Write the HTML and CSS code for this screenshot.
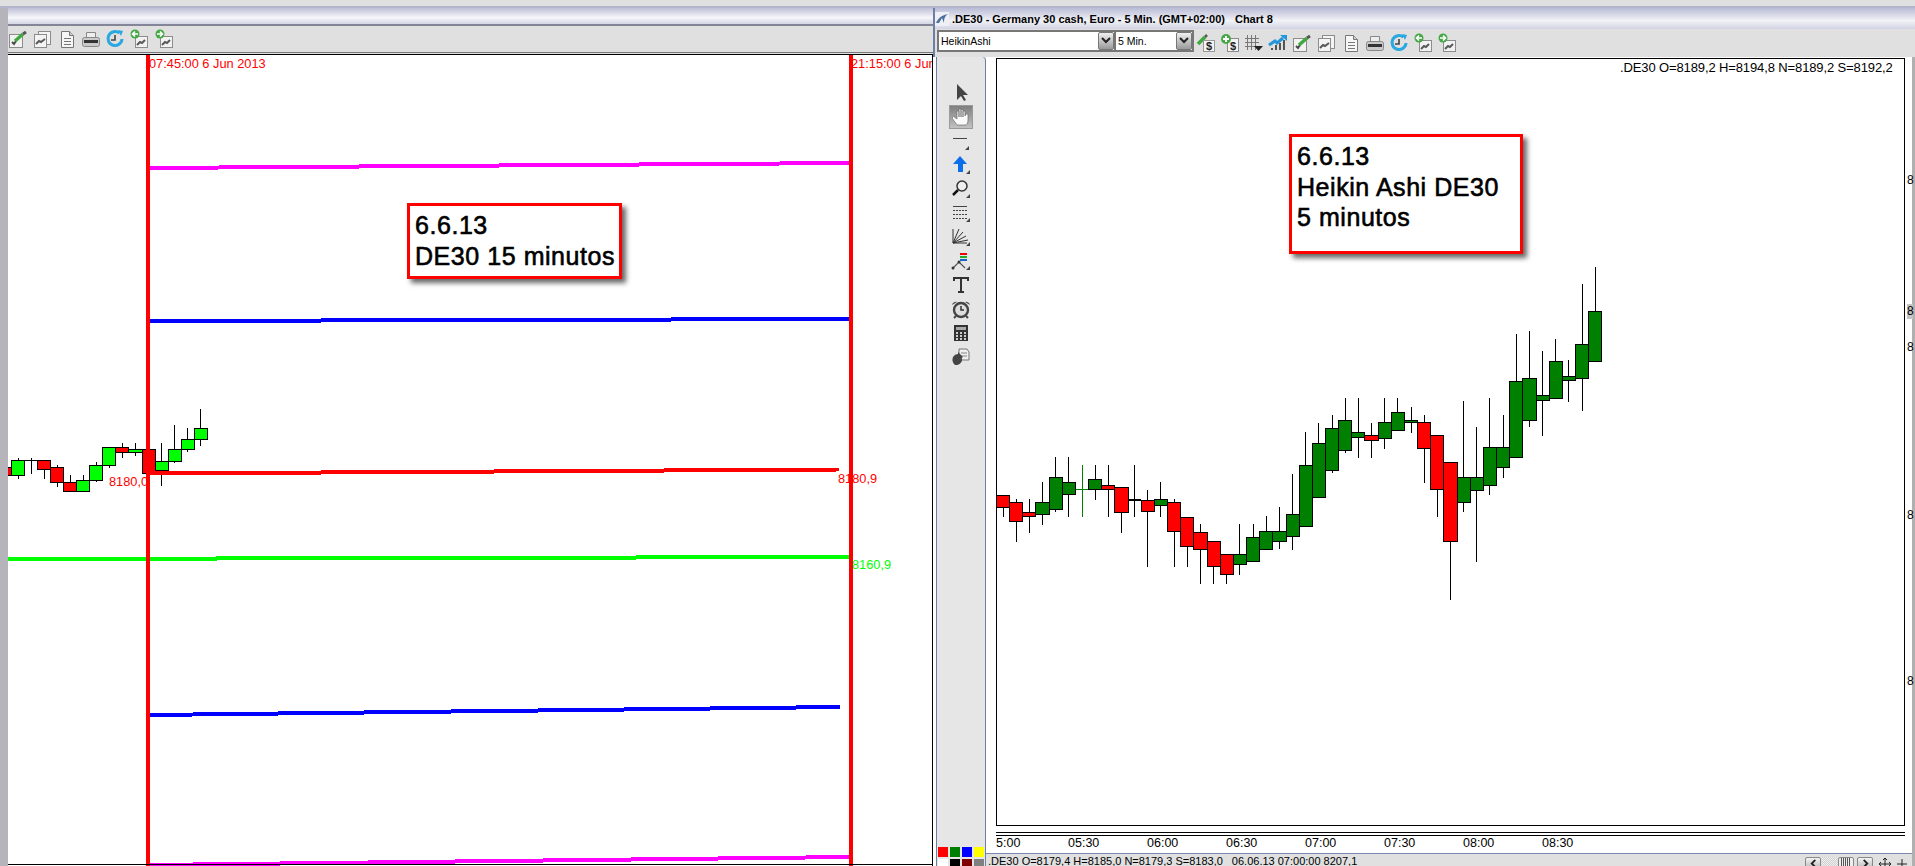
FILE: index.html
```html
<!DOCTYPE html>
<html lang="es">
<head>
<meta charset="utf-8">
<title>.DE30 charts</title>
<link rel="stylesheet" href="styles.css">
</head>
<body>
<svg class="defs" width="0" height="0" aria-hidden="true">
  <defs>
    <symbol id="i-edit" viewBox="0 0 20 20"><rect x="1.500" y="5.500" width="13" height="13" fill="#f2f2f2" stroke="#8c8c8c"/><path d="M4 13l2 2 2-3" fill="none" stroke="#4a4a4a" stroke-width="2"/><path d="M7 12l8-7" stroke="#3fa83f" stroke-width="3.500"/><path d="M15 5l3-2" stroke="#555" stroke-width="3"/></symbol>
    <symbol id="i-copy" viewBox="0 0 20 20"><rect x="6.500" y="2.500" width="12" height="13" fill="#f4f4f4" stroke="#8c8c8c"/><rect x="2.500" y="5.500" width="12" height="13" fill="#f4f4f4" stroke="#8c8c8c"/><path d="M4 15l3-3 2 1 4-3" fill="none" stroke="#5a5a5a" stroke-width="2"/></symbol>
    <symbol id="i-page" viewBox="0 0 20 20"><path d="M4.500 2.500h8l4 4v12h-12z" fill="#f6f6f6" stroke="#777"/><path d="M12.500 2.500v4h4" fill="#ccc" stroke="#777"/><path d="M7 9.500h7M7 12.500h7M7 15.500h7" stroke="#777"/></symbol>
    <symbol id="i-print" viewBox="0 0 20 20"><path d="M5.500 3.500h9v5h-9z" fill="#eee" stroke="#888"/><rect x="1.500" y="8.500" width="17" height="9" rx="2" fill="#c9c9c9" stroke="#888"/><rect x="3" y="11" width="14" height="3" fill="#333"/></symbol>
    <symbol id="i-clock" viewBox="0 0 20 20"><path d="M14.500 4.200A7 7 0 1 0 17 10" fill="none" stroke="#2aa8e0" stroke-width="3"/><path d="M13 1l5 1-2 5z" fill="#2aa8e0"/><path d="M10 6v5h-4" fill="none" stroke="#444" stroke-width="1.600"/></symbol>
    <symbol id="i-back" viewBox="0 0 20 20"><rect x="6.500" y="7.500" width="12" height="11" fill="#f2f2f2" stroke="#8c8c8c"/><path d="M8 16l3-3 2 1 3-3" fill="none" stroke="#5a5a5a" stroke-width="2"/><circle cx="6" cy="5" r="4.500" fill="#45a845"/><path d="M9 5H4M6 2.500L3.500 5 6 7.500" fill="none" stroke="#fff" stroke-width="1.600"/></symbol>
    <symbol id="i-fwd" viewBox="0 0 20 20"><rect x="6.500" y="7.500" width="12" height="11" fill="#f2f2f2" stroke="#8c8c8c"/><path d="M8 16l3-3 2 1 3-3" fill="none" stroke="#5a5a5a" stroke-width="2"/><circle cx="6" cy="5" r="4.500" fill="#45a845"/><path d="M3 5h5M6 2.500L8.500 5 6 7.500" fill="none" stroke="#fff" stroke-width="1.600"/></symbol>
    <symbol id="i-dollar" viewBox="0 0 20 20"><path d="M2 11l7-7" stroke="#3fa83f" stroke-width="3.500"/><path d="M9 4l2-2" stroke="#555" stroke-width="2.500"/><rect x="7.500" y="7.500" width="11" height="11" fill="#f4f4f4" stroke="#999"/><text class="icon-dollar" x="13" y="17">$</text></symbol>
    <symbol id="i-plusd" viewBox="0 0 20 20"><rect x="7.500" y="5.500" width="11" height="13" fill="#f4f4f4" stroke="#8c8c8c"/><text class="icon-dollar" x="13" y="16.500">$</text><circle cx="6" cy="6" r="5" fill="#45a845"/><path d="M3 6h6M6 3v6" stroke="#fff" stroke-width="2"/></symbol>
    <symbol id="i-grid" viewBox="0 0 20 20"><path d="M1 5.500h14M1 9.500h14M1 13.500h14M3.500 2v15M7.500 2v15M11.500 2v15" stroke="#777"/><path d="M10 13h9l-4.500 5z" fill="#222"/></symbol>
    <symbol id="i-growth" viewBox="0 0 20 20"><path d="M3 17h2v-2H3zM7 17h2v-5H7zM11 17h2v-7h-2zM15 17h2V7h-2z" fill="#555"/><path d="M1 12l6-4 2 2 6-5" fill="none" stroke="#2496dc" stroke-width="3"/><path d="M12 2h7v6z" fill="#2496dc"/></symbol>
    <symbol id="t-arrow" viewBox="0 0 20 20"><path d="M6 1v16l4-4 3 5 2-1-3-5h5z" fill="#444"/></symbol>
    <symbol id="t-hand" viewBox="0 0 20 20"><path d="M6 18L1 11l1.500-1.500L6 12V4h2v6V2h2v8V2.500h2V10V4h2v5l1-2h2v6c0 3-1 4-2 5z" fill="#fafafa" stroke="#6e6e6e" stroke-width=".7"/></symbol>
    <symbol id="t-line" viewBox="0 0 20 20"><path d="M2 7.500h14" stroke="#444"/><path d="M18 15v4h-4z" fill="#444"/></symbol>
    <symbol id="t-up" viewBox="0 0 20 20"><path d="M9 1l7 8h-4v8H7V9H2z" fill="#0a6fe8"/><path d="M19 15v4h-4z" fill="#444"/></symbol>
    <symbol id="t-zoom" viewBox="0 0 20 20"><circle cx="11" cy="7" r="5" fill="#eee" stroke="#333" stroke-width="1.500"/><path d="M7 11l-5 5" stroke="#111" stroke-width="2.500"/><path d="M19 15v4h-4z" fill="#444"/></symbol>
    <symbol id="t-dots" viewBox="0 0 20 20"><path d="M2 3.500h14" stroke="#444"/><path d="M2 7.500h14M2 11.500h14M2 15.500h14" stroke="#444" stroke-dasharray="2 1"/><path d="M19 15v4h-4z" fill="#444"/></symbol>
    <symbol id="t-fan" viewBox="0 0 20 20"><path d="M2 2v14h14M2 16l6-14M2 16l10-11M2 16l13-7M2 16l15-3" fill="none" stroke="#333"/><path d="M19 15v4h-4z" fill="#444"/></symbol>
    <symbol id="t-zig" viewBox="0 0 20 20"><path d="M2 17l6-6 6 6" fill="none" stroke="#555" stroke-width="1.200"/><circle cx="2" cy="17" r="1.500" fill="#333"/><circle cx="8" cy="11" r="1.500" fill="#333"/><path d="M9 2h7v2H9z" fill="#e00"/><path d="M9 5h7v2H9z" fill="#2a2"/><path d="M9 8h7v2H9z" fill="#16c"/><path d="M19 15v4h-4z" fill="#444"/></symbol>
    <symbol id="t-text" viewBox="0 0 20 20"><path d="M3 6V3h14v3M10 3v14M7 17h6" fill="none" stroke="#333" stroke-width="2"/></symbol>
    <symbol id="t-alarm" viewBox="0 0 20 20"><circle cx="10" cy="11" r="7" fill="#ddd" stroke="#444" stroke-width="2.400"/><path d="M10 7v4h3" fill="none" stroke="#333" stroke-width="1.500"/><path d="M1 6a4 4 0 0 1 5-3zM19 6a4 4 0 0 0-5-3z" fill="#444"/><path d="M5 17l-2 2M15 17l2 2" stroke="#444" stroke-width="2"/></symbol>
    <symbol id="t-calc" viewBox="0 0 20 20"><rect x="3" y="2" width="14" height="16" fill="#333"/><rect x="5" y="4" width="10" height="3" fill="#aaa"/><path d="M5 9h2v2H5zM9 9h2v2H9zM13 9h2v2h-2zM5 12h2v2H5zM9 12h2v2H9zM13 12h2v2h-2zM5 15h2v2H5zM9 15h2v2H9zM13 15h2v2h-2z" fill="#ccc"/></symbol>
    <symbol id="t-link" viewBox="0 0 20 20"><path d="M8 2h8l2 3v8H8z" fill="#eee" stroke="#777"/><path d="M10 6h6M10 9h6" stroke="#888"/><path d="M11 11a6 6 0 0 1-7 7 7 7 0 0 1-2-8 6 6 0 0 1 5-3v-2l5 5-5 4z" fill="#444"/></symbol>
  </defs>
</svg>

<div class="strip"></div>
<main class="panes">
  <section class="left">
    <div class="caption"></div>
    <div class="toolbar toolbar-left">
      <svg class="ico"><use href="#i-edit"/></svg>
      <svg class="ico"><use href="#i-copy"/></svg>
      <svg class="ico"><use href="#i-page"/></svg>
      <svg class="ico"><use href="#i-print"/></svg>
      <svg class="ico"><use href="#i-clock"/></svg>
      <svg class="ico"><use href="#i-back"/></svg>
      <svg class="ico"><use href="#i-fwd"/></svg>
    </div>
    <div class="chart-left">
      <svg class="plot" width="925" height="812" viewBox="8 54 925 812">
        <text class="lbl red" x="149" y="68">07:45:00 6 Jun 2013</text>
        <text class="lbl red" x="851" y="68">21:15:00 6 Jun</text>
        <text class="lbl red" x="109" y="486">8180,0</text>
        <text class="lbl red" x="838" y="483">8180,9</text>
        <text class="lbl lime" x="852" y="569">8160,9</text>
        <g class="candles" transform="translate(0 400) scale(.33333)">
          <rect class="r" x="24" y="202" width="10" height="24"/>
          <path class="w" d="M55 175V236"/><rect class="l" x="34" y="181" width="39" height="45"/>
          <path class="w" d="M94 175V221M73 181H112"/>
          <path class="w" d="M133 208V236"/><rect class="r" x="112" y="181" width="39" height="27"/>
          <path class="w" d="M172 196V260"/><rect class="r" x="151" y="202" width="39" height="45"/>
          <path class="w" d="M211 226V247"/><rect class="r" x="190" y="247" width="39" height="27"/>
          <path class="w" d="M250 226V241"/><rect class="l" x="229" y="241" width="39" height="33"/>
          <path class="w" d="M289 187V247"/><rect class="l" x="268" y="196" width="39" height="45"/>
          <path class="w" d="M328 196V205"/><rect class="l" x="307" y="142" width="39" height="54"/>
          <path class="w" d="M367 130V175"/><rect class="r" x="346" y="142" width="39" height="15"/>
          <path class="w" d="M406 130V169"/><rect class="l" x="385" y="148" width="42" height="9"/>
          <rect class="r" x="427" y="148" width="39" height="72"/>
          <path class="w" d="M484 130V258"/><rect class="l" x="466" y="184" width="39" height="27"/>
          <path class="w" d="M523 76V190"/><rect class="l" x="505" y="148" width="39" height="36"/>
          <path class="w" d="M562 85V157"/><rect class="l" x="544" y="118" width="39" height="30"/>
          <path class="w" d="M601 28V139"/><rect class="l" x="583" y="85" width="39" height="33"/>
        </g>
        <g class="levels">
          <path class="magenta" d="M150 168L850 163"/>
          <path class="blue" d="M150 321L850 319"/>
          <path class="rline" d="M150 473.500L839 469.500"/>
          <path class="green" d="M8 559L850 557"/>
          <path class="blue" d="M150 715L840 707"/>
          <path class="magenta" d="M150 865L850 857"/>
        </g>
        <rect class="vbar" x="146" y="54" width="4" height="812"/>
        <rect class="vbar" x="849" y="54" width="4" height="812"/>
        <path class="frame" d="M8 54.500H933M932.500 54V866M8 864.500H933"/>
      </svg>
      <div class="note note-left">6.6.13<br>DE30 15 minutos</div>
    </div>
  </section>

  <section class="right">
    <header class="win-title">
      <svg class="win-logo" viewBox="0 0 14 14"><path d="M1 11c2-5 6-8 12-9-3 2-4 4-4 9l-2-5-3 5z" fill="#4d6f9f"/></svg>
      <span class="win-name">.DE30 - Germany 30 cash, Euro - 5 Min. (GMT+02:00)</span>
      <span class="win-chart">Chart 8</span>
    </header>
    <div class="toolbar toolbar-right">
      <div class="combo combo-type"><span>HeikinAshi</span><i class="combo-btn"><svg viewBox="0 0 10 8"><path d="M1 1l4 4 4-4" fill="none" stroke="#222" stroke-width="2"/></svg></i></div>
      <div class="combo combo-period"><span>5 Min.</span><i class="combo-btn"><svg viewBox="0 0 10 8"><path d="M1 1l4 4 4-4" fill="none" stroke="#222" stroke-width="2"/></svg></i></div>
      <div class="icons">
        <svg class="ico"><use href="#i-dollar"/></svg>
        <svg class="ico"><use href="#i-plusd"/></svg>
        <svg class="ico"><use href="#i-grid"/></svg>
        <svg class="ico"><use href="#i-growth"/></svg>
        <svg class="ico"><use href="#i-edit"/></svg>
        <svg class="ico"><use href="#i-copy"/></svg>
        <svg class="ico"><use href="#i-page"/></svg>
        <svg class="ico"><use href="#i-print"/></svg>
        <svg class="ico"><use href="#i-clock"/></svg>
        <svg class="ico"><use href="#i-back"/></svg>
        <svg class="ico"><use href="#i-fwd"/></svg>
      </div>
    </div>
    <div class="win-body">
      <aside class="tools">
        <span class="tool"><svg class="tico"><use href="#t-arrow"/></svg></span>
        <span class="tool active"><svg class="tico"><use href="#t-hand"/></svg></span>
        <span class="tool"><svg class="tico"><use href="#t-line"/></svg></span>
        <span class="tool"><svg class="tico"><use href="#t-up"/></svg></span>
        <span class="tool"><svg class="tico"><use href="#t-zoom"/></svg></span>
        <span class="tool"><svg class="tico"><use href="#t-dots"/></svg></span>
        <span class="tool"><svg class="tico"><use href="#t-fan"/></svg></span>
        <span class="tool"><svg class="tico"><use href="#t-zig"/></svg></span>
        <span class="tool"><svg class="tico"><use href="#t-text"/></svg></span>
        <span class="tool"><svg class="tico"><use href="#t-alarm"/></svg></span>
        <span class="tool"><svg class="tico"><use href="#t-calc"/></svg></span>
        <span class="tool"><svg class="tico"><use href="#t-link"/></svg></span>
        <div class="swatches">
          <i class="sw sw-red"></i><i class="sw sw-green"></i><i class="sw sw-blue"></i><i class="sw sw-yellow"></i>
          <i class="sw sw-white"></i><i class="sw sw-black"></i><i class="sw sw-maroon"></i><i class="sw sw-gray"></i>
        </div>
      </aside>
      <div class="main">
        <div class="plot-area">
          <div class="chart-box">
            <svg class="plot" width="907" height="766" viewBox="997 59 907 766">
              <text class="lbl-top" x="1620" y="72">.DE30 O=8189,2 H=8194,8 N=8189,2 S=8192,2</text>
              <g class="candles" transform="translate(990 440) scale(.33333)">
                <path class="w" d="M40 202V230"/><rect class="r" x="20" y="166" width="38" height="36"/>
                <path class="w" d="M79 178V305"/><rect class="r" x="59" y="187" width="38" height="57"/>
                <path class="w" d="M118 178V278"/><rect class="r" x="98" y="217" width="39" height="12"/>
                <path class="w" d="M157 127V254"/><rect class="d" x="137" y="187" width="41" height="36"/>
                <path class="w" d="M196 52V215"/><rect class="d" x="178" y="112" width="39" height="96"/>
                <path class="w" d="M235 52V230"/><rect class="d" x="218" y="127" width="38" height="36"/>
                <path class="wg" d="M277 76V230M257 148H295"/>
                <path class="w" d="M316 76V179"/><rect class="d" x="295" y="118" width="39" height="30"/>
                <path class="w" d="M355 76V230"/><rect class="r" x="335" y="136" width="38" height="12"/>
                <path class="w" d="M394 217V278"/><rect class="r" x="374" y="142" width="41" height="75"/>
                <path class="w" d="M433 76V230M415 178H454M415 181H454"/>
                <path class="w" d="M472 151V380"/><rect class="r" x="454" y="181" width="39" height="33"/>
                <path class="w" d="M511 127V230"/><rect class="d" x="493" y="178" width="39" height="18"/>
                <path class="w" d="M553 178V380"/><rect class="r" x="532" y="187" width="39" height="87"/>
                <path class="w" d="M592 319V380"/><rect class="r" x="572" y="232" width="38" height="87"/>
                <path class="w" d="M631 253V431"/><rect class="r" x="611" y="277" width="41" height="51"/>
                <path class="w" d="M670 379V431"/><rect class="r" x="653" y="304" width="38" height="75"/>
                <path class="w" d="M709 403V431"/><rect class="r" x="691" y="343" width="39" height="60"/>
                <path class="w" d="M748 253V404"/><rect class="d" x="730" y="343" width="39" height="30"/>
                <path class="w" d="M790 253V292"/><rect class="d" x="769" y="292" width="39" height="72"/>
                <path class="w" d="M829 229V274"/><rect class="d" x="808" y="274" width="39" height="54"/>
                <path class="w" d="M868 202V328"/><rect class="d" x="848" y="274" width="41" height="30"/>
                <path class="w" d="M907 103V329"/><rect class="d" x="889" y="223" width="39" height="66"/>
              </g>
              <g class="candles" transform="translate(1290 250) scale(.33333)">
                <path class="w" d="M46 546V832"/><rect class="d" x="28" y="646" width="39" height="183"/>
                <path class="w" d="M85 519V580"/><rect class="d" x="67" y="580" width="39" height="162"/>
                <path class="w" d="M127 495V668"/><rect class="d" x="106" y="535" width="39" height="126"/>
                <path class="w" d="M166 445V608"/><rect class="d" x="145" y="511" width="39" height="90"/>
                <path class="w" d="M205 445V623"/><rect class="d" x="184" y="547" width="39" height="15"/>
                <path class="w" d="M244 520V623"/><rect class="r" x="223" y="556" width="42" height="15"/>
                <path class="w" d="M283 445V596"/><rect class="d" x="265" y="517" width="39" height="48"/>
                <path class="w" d="M322 445V487"/><rect class="d" x="304" y="487" width="39" height="54"/>
                <path class="w" d="M364 472V548"/><rect class="d" x="343" y="511" width="39" height="6"/>
                <path class="w" d="M403 496V698"/><rect class="r" x="382" y="517" width="39" height="78"/>
                <path class="w" d="M442 718V800"/><rect class="r" x="421" y="556" width="39" height="162"/>
                <path class="w" d="M481 874V1049"/><rect class="r" x="460" y="637" width="42" height="237"/>
                <path class="w" d="M520 454V785"/><rect class="d" x="502" y="682" width="39" height="75"/>
                <path class="w" d="M559 532V935"/><rect class="d" x="541" y="682" width="39" height="39"/>
                <path class="w" d="M598 445V734"/><rect class="d" x="580" y="592" width="39" height="114"/>
                <path class="w" d="M640 496V683"/><rect class="d" x="619" y="592" width="39" height="60"/>
                <path class="w" d="M679 253V394"/><rect class="d" x="658" y="394" width="39" height="228"/>
                <path class="w" d="M718 244V532"/><rect class="d" x="697" y="385" width="42" height="126"/>
                <path class="w" d="M757 304V557"/><rect class="d" x="739" y="436" width="39" height="15"/>
                <path class="w" d="M796 268V334"/><rect class="d" x="778" y="334" width="39" height="111"/>
                <path class="w" d="M835 331V455"/><rect class="d" x="817" y="379" width="39" height="12"/>
                <path class="w" d="M877 103V482"/><rect class="d" x="856" y="283" width="39" height="102"/>
                <path class="w" d="M916 52V184"/><rect class="d" x="895" y="184" width="39" height="150"/>
              </g>
            </svg>
          </div>
          <div class="xaxis"></div>
          <div class="xlabels"><span>5:00</span><span>05:30</span><span>06:00</span><span>06:30</span><span>07:00</span><span>07:30</span><span>08:00</span><span>08:30</span></div>
          <span class="ytick y1">8</span>
          <span class="ytick y2">8</span>
          <span class="ytick y3">8</span>
          <span class="ytick y4">8</span>
          <span class="ytick y5">8</span>
          <div class="note note-right">6.6.13<br>Heikin Ashi DE30<br>5 minutos</div>
        </div>
        <footer class="status">
          <span class="status-ohlc">.DE30 O=8179,4 H=8185,0 N=8179,3 S=8183,0</span>
          <span class="status-time">06.06.13 07:00:00 8207,1</span>
          <div class="scroller">
            <i class="sbtn"><svg viewBox="0 0 10 10"><path d="M7 1L3 5l4 4" fill="none" stroke="#222" stroke-width="2"/></svg></i>
            <i class="strack"></i>
            <i class="sthumb"></i>
            <i class="sbtn"><svg viewBox="0 0 10 10"><path d="M3 1l4 4-4 4" fill="none" stroke="#222" stroke-width="2"/></svg></i>
            <svg class="smove" viewBox="0 0 12 12"><path d="M6 0v12M0 6h12M4 2l2-2 2 2M4 10l2 2 2-2M2 4L0 6l2 2M10 4l2 2-2 2" fill="none" stroke="#222"/></svg>
            <svg class="splus" viewBox="0 0 10 10"><path d="M5 0v10M0 5h10" stroke="#222"/></svg>
          </div>
        </footer>
      </div>
    </div>
  </section>
</main>
</body>
</html>
```

FILE: styles.css
```css
* { box-sizing: border-box; }
html, body { margin: 0; padding: 0; }
html { width: 1915px; height: 866px; overflow: hidden; }
body {
  width: 1915px;
  height: 866px;
  overflow: hidden;
  background: #e0e0e0;
  font-family: "Liberation Sans", Arial, sans-serif;
  color: #000;
  display: flex;
  flex-direction: column;
}
.defs { position: absolute; }
.strip {
  height: 8px;
  flex: none;
  background: #e0e0e0;
  border-bottom: 2px solid #b4b4cc;
}
.panes { flex: 1; display: flex; min-height: 0; overflow: hidden; }

/* left window */
.left {
  width: 933px;
  flex: none;
  display: flex;
  flex-direction: column;
  border-left: 8px solid #b4b4ba;
}
.caption {
  height: 18px;
  flex: none;
  background: linear-gradient(#bfc0d8, #f6f6fa 60%, #d4d5e4);
  border-bottom: 2px solid #85859a;
}
.toolbar { display: flex; align-items: center; background: #e0e0e0; flex: none; }
.toolbar-left {
  height: 27px;
  gap: 4.3px;
  border-bottom: 1px solid #777;
  margin-bottom: 1px;
}
.ico { width: 20px; height: 20px; flex: none; display: block; }
.chart-left { flex: 1; position: relative; min-height: 0; overflow: hidden; background: #fff; }
.plot { display: block; }
.lbl { font-size: 12.8px; }
.red { fill: #f00; }
.lime { fill: #0f0; }
.lbl-top { font-size: 13px; letter-spacing: -.12px; fill: #000; }
.candles { shape-rendering: crispEdges; }
.w { stroke: #000; stroke-width: 3; fill: none; }
.wg { stroke: #008000; stroke-width: 3; fill: none; }
.r, .l, .d { stroke: #000; stroke-width: 3; }
.r { fill: #f00; }
.l { fill: #0f0; }
.d { fill: #008000; }
.levels { shape-rendering: crispEdges; fill: none; stroke-width: 4; }
.magenta { stroke: #f0f; }
.blue { stroke: #00f; }
.rline { stroke: #f00; }
.green { stroke: #0f0; }
.vbar { fill: #f00; }
.frame { stroke: #000; fill: none; }

/* annotation boxes */
.note {
  position: absolute;
  background: #fff;
  border: 3px solid #f00;
  box-shadow: 4px 4px 5px rgba(0, 0, 0, .6);
  font-size: 25px;
  line-height: 30.5px;
  letter-spacing: .55px;
  -webkit-text-stroke: .6px #000;
  padding: 4px 0 0 5px;
  white-space: nowrap;
}
.note-left { left: 399px; top: 149px; width: 215px; height: 76px; }
.note-right { left: 303px; top: 77px; width: 234px; height: 120px; }

/* right window */
.right { flex: 1; min-width: 0; display: flex; flex-direction: column; }
.win-title {
  height: 21px;
  flex: none;
  display: flex;
  align-items: center;
  gap: 10px;
  background: linear-gradient(#b9bcd6, #f2f2f7 60%, #d2d4e4);
  border-left: 2px solid #6f7ea6;
  font-size: 11px;
  font-weight: 700;
  white-space: nowrap;
}
.win-logo { width: 14px; height: 14px; margin-right: -7px; background: #eef0f6; }
.toolbar-right { height: 28px; border-left: 2px solid #6f7ea6; padding: 0 0 4px 2px; }
.combo {
  height: 22px;
  display: flex;
  align-items: center;
  justify-content: space-between;
  background: #fff;
  border: 2px solid #777;
  font-size: 10.5px;
  padding: 0 0 0 2px;
}
.combo-type { width: 179px; }
.combo-period { width: 78px; border-left-width: 0; }
.combo-btn {
  width: 16px;
  height: 18px;
  border: 1px solid #777;
  border-radius: 2px;
  background: linear-gradient(#f0f0f0, #9a9a9a);
  display: flex;
  align-items: center;
  justify-content: center;
}
.combo-btn svg { width: 10px; height: 8px; }
.icons { display: flex; gap: 4.1px; padding: 4px 0 0 2px; }

.win-body { flex: 1; min-height: 0; display: flex; border-right: 3px solid #b0b0b0; }
.tools {
  width: 53px;
  flex: none;
  display: flex;
  flex-direction: column;
  align-items: center;
  padding: 24px 0 0;
  background: #e6e6e6;
  border-left: 3px solid #fff;
  border-right: 1px solid #6f7ea6;
  box-shadow: inset 1px 0 0 #6f7ea6;
  border-radius: 0 4px 0 0;
  overflow: hidden;
}
.tool {
  width: 24px;
  height: 24px;
  flex: none;
  display: flex;
  align-items: center;
  justify-content: center;
}
.tool.active { background: linear-gradient(#7e7e7e, #c2c2c2); border: 1px solid #9a9a9a; }
.tico { width: 20px; height: 20px; display: block; }
.swatches {
  margin-top: auto;
  margin-bottom: -3px;
  align-self: flex-start;
  margin-left: 2px;
  display: grid;
  grid-template-columns: repeat(4, 10px);
  grid-auto-rows: 10px;
  gap: 2px;
}
.sw { display: block; }
.sw-red { background: #f00; }
.sw-green { background: #008000; }
.sw-blue { background: #00f; }
.sw-yellow { background: #ff0; }
.sw-white { background: #fff; }
.sw-black { background: #000; }
.sw-maroon { background: #800000; }
.sw-gray { background: #808080; }

.main { flex: 1; min-width: 0; display: flex; flex-direction: column; background: #fff; }
.plot-area { flex: 1; min-height: 0; position: relative; padding: 1px 7px 0 10px; }
.chart-box { width: 909px; height: 768px; border: 1px solid #000; overflow: hidden; }
.xaxis { height: 4px; margin-top: 6px; width: 909px; border-top: 1px solid #000; border-bottom: 1px solid #000; }
.xlabels {
  display: flex;
  width: 909px;
  height: 17px;
  overflow: hidden;
  font-size: 12.5px;
  line-height: 15px;
}
.xlabels span { flex: none; width: 79px; }
.xlabels span:first-child { width: 72px; }
.ytick { position: absolute; left: 921px; width: 6px; font-size: 12px; line-height: 15px; white-space: nowrap; }
.y1 { top: 116px; }
.y2 { top: 247px; background: #c4c4c4; }
.y3 { top: 283px; }
.y4 { top: 451px; }
.y5 { top: 617px; }

.status {
  height: 13px;
  flex: none;
  display: flex;
  align-items: flex-start;
  overflow: hidden;
  background: #e0e0e0;
  border-top: 1px solid #7a8ab0;
  font-size: 11px;
  line-height: 15px;
  padding: 0 5px 0 2px;
  white-space: nowrap;
}
.status-time { margin-left: 9px; }
.scroller { margin-left: auto; display: flex; align-items: flex-start; padding-top: 3px; }
.sbtn {
  width: 16px;
  height: 14px;
  flex: none;
  border: 1px solid #888;
  border-radius: 2px;
  background: linear-gradient(#f4f4f4, #b0b0b0);
  display: flex;
  justify-content: center;
  padding-top: 1px;
}
.sbtn svg { width: 9px; height: 9px; }
.strack {
  width: 17px;
  height: 14px;
  background: repeating-conic-gradient(#cfcfcf 0 25%, #f0f0f0 0 50%) 0 0 / 2px 2px;
}
.sthumb {
  width: 16px;
  height: 14px;
  margin-right: 3px;
  border: 1px solid #888;
  border-radius: 2px;
  background: repeating-linear-gradient(90deg, #555 0 1px, #eee 1px 2px) center / 10px 100% no-repeat #eee;
}
.smove { width: 12px; height: 12px; margin: 1px 0 0 6px; }
.splus { width: 10px; height: 10px; margin: 2px 0 0 6px; }
.icon-dollar { font-size: 11px; font-weight: 700; text-anchor: middle; fill: #222; font-family: "Liberation Sans", sans-serif; }
```
